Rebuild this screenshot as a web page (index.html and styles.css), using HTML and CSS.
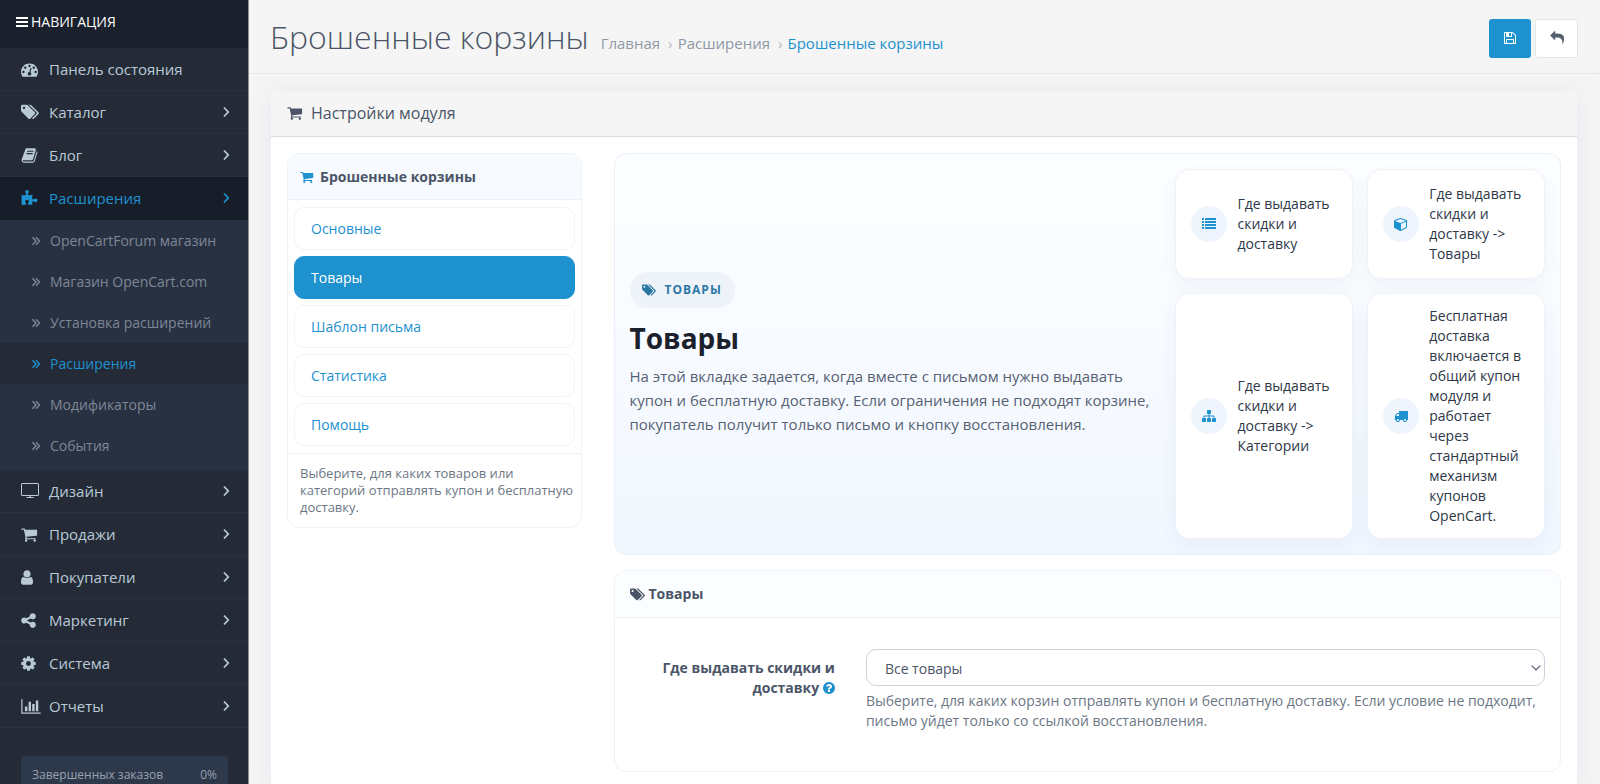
FILE: index.html
```html
<!DOCTYPE html>
<html lang="ru">
<head>
<meta charset="utf-8">
<title>Брошенные корзины</title>
<link rel="stylesheet" href="styles.css">
</head>
<body>
<svg class="sprite" aria-hidden="true">
  <symbol id="bars" viewBox="0 0 12 12"><path d="M0 1h12v2H0zM0 5h12v2H0zM0 9h12v2H0z"/></symbol>
  <symbol id="tachometer" viewBox="0 0 1792 1792"><path d="M384 1152q0-53-37.500-90.500t-90.500-37.500-90.500 37.500-37.500 90.500 37.500 90.500 90.500 37.500 90.500-37.500 37.500-90.500zm192-448q0-53-37.500-90.500t-90.500-37.500-90.500 37.500-37.500 90.500 37.500 90.500 90.500 37.500 90.500-37.500 37.500-90.500zm428 481l101-382q6-26-7.500-48.500t-38.500-29.500-48 6.500-30 39.500l-101 382q-60 5-107 43.500t-63 98.500q-20 77 20 146t117 89 146-20 89-117q16-60-6-117t-72-91zm660-33q0-53-37.500-90.500t-90.500-37.500-90.500 37.500-37.500 90.500 37.500 90.500 90.500 37.500 90.500-37.500 37.500-90.500zm-640-640q0-53-37.500-90.500t-90.500-37.500-90.500 37.500-37.500 90.500 37.500 90.500 90.500 37.500 90.500-37.500 37.500-90.500zm448 192q0-53-37.500-90.500t-90.500-37.500-90.500 37.500-37.500 90.500 37.500 90.500 90.500 37.500 90.500-37.500 37.500-90.500zm320 448q0 261-141 483-19 29-54 29h-1402q-35 0-54-29-141-221-141-483 0-182 71-348t191-286 286-191 348-71 348 71 286 191 191 286 71 348z"/></symbol>
  <symbol id="tags" viewBox="128 0 1920 1792"><path d="M576 448q0-53-37.500-90.500t-90.500-37.500-90.500 37.500-37.500 90.500 37.500 90.500 90.500 37.500 90.500-37.500 37.500-90.500zm1067 576q0 53-37 90l-491 492q-39 37-91 37-53 0-90-37l-715-716q-38-37-64.500-101t-26.500-117v-416q0-52 38-90t90-38h416q53 0 117 26.500t102 64.500l715 714q37 39 37 91zm384 0q0 53-37 90l-491 492q-39 37-91 37-36 0-59-14t-53-45l470-470q37-37 37-90 0-52-37-91l-715-714q-38-38-102-64.500t-117-26.500h224q53 0 117 26.500t102 64.500l715 714q37 39 37 91z"/></symbol>
  <symbol id="book" viewBox="64 0 1664 1792"><path d="M1703 478q40 57 18 129l-275 906q-19 64-76.500 107.500t-122.500 43.500h-923q-77 0-148.500-53.500t-99.500-131.500q-24-67-2-127 0-4 3-27t4-37q1-8-3-21.500t-3-19.500q2-11 8-21t16.500-23.500 16.500-23.500q23-38 45-91.500t30-91.500q3-10 .5-30t-.5-28q3-11 17-28t17-23q21-36 42-92t25-90q1-9-2.500-32t.5-28q4-13 22-30.500t22-22.500q19-26 42.500-84.500t27.500-96.500q1-8-3-25.500t-2-26.500q2-8 9-18t18-23 17-21q8-12 16.500-30.500t15-35 16-36 19.500-32 26.500-23.500 36-11.500 47.500 5.500l-1 3q38-9 51-9h761q74 0 114 56t18 130l-274 906q-36 119-71.500 153.500t-128.500 34.500h-869q-27 0-38 15-11 16-1 43 24 70 144 70h923q29 0 56-15.500t35-41.500l300-987q7-22 5-57 38 15 59 43zm-1064 2q-4 13 2 22.500t20 9.500h608q13 0 25.500-9.500t16.500-22.500l21-64q4-13-2-22.500t-20-9.500h-608q-13 0-25.500 9.500t-16.500 22.500zm-83 256q-4 13 2 22.500t20 9.500h608q13 0 25.500-9.500t16.500-22.500l21-64q4-13-2-22.500t-20-9.500h-608q-13 0-25.500 9.500t-16.500 22.500z"/></symbol>
  <symbol id="puzzle" viewBox="64 0 1728 1792"><path d="M1755 1099q0 81-44.500 135t-123.500 54q-41 0-77.500-17.500t-59-38-56.500-38-71-17.500q-110 0-110 124 0 39 16 115t15 115v5q-22 0-33 1-34 3-97.500 11.500t-115.500 13.500-98 5q-61 0-103-26.500t-42-83.500q0-37 17.500-71t38-56.500 38-59 17.500-77.500q0-79-54-123.500t-135-44.500q-84 0-143 45.500t-59 127.500q0 43 15 83t33.500 64.500 33.500 53 15 50.500q0 45-46 89-37 35-117 35-95 0-245-24-9-2-27.500-4t-27.500-4l-13-2q-1 0-3-1-2 0-2-1v-1024q2 1 17.500 3.500t34 5 21.500 3.500q150 24 245 24 80 0 117-35 46-44 46-89 0-22-15-50.500t-33.500-53-33.500-64.500-15-83q0-82 59-127.500t144-45.500q80 0 134 44.500t54 123.500q0 41-17.500 77.500t-38 59-38 56.500-17.500 71q0 57 42 83.500t103 26.500q64 0 180-15t163-17v2q-1 2-3.500 17.500t-5 34-3.500 21.500q-24 150-24 245 0 80 35 117 44 46 89 46 22 0 50.500-15t53-33.500 64.500-33.500 83-15q82 0 127.500 59t45.500 143z"/></symbol>
  <symbol id="tv" viewBox="0 0 18 16"><path fill-rule="evenodd" d="M1.500 0h15A1.500 1.500 0 0 1 18 1.500v10a1.500 1.500 0 0 1-1.500 1.500h-6.900v1h2.900v1h-7v-1h2.900v-1H1.500A1.500 1.500 0 0 1 0 11.500v-10A1.500 1.500 0 0 1 1.500 0zm0 1a.5.5 0 0 0-.5.5v10a.5.5 0 0 0 .5.5h15a.5.5 0 0 0 .5-.5v-10a.5.5 0 0 0-.5-.5z"/></symbol>
  <symbol id="cart" viewBox="64 0 1728 1792"><path d="M704 1536q0 52-38 90t-90 38-90-38-38-90 38-90 90-38 90 38 38 90zm896 0q0 52-38 90t-90 38-90-38-38-90 38-90 90-38 90 38 38 90zm128-1088v512q0 24-16.500 42.500t-40.500 21.500l-1044 122q13 60 13 70 0 16-24 64h920q26 0 45 19t19 45-19 45-45 19h-1024q-26 0-45-19t-19-45q0-11 8-31.500t16-36 21.500-40 15.500-29.500l-177-823h-204q-26 0-45-19t-19-45 19-45 45-19h256q16 0 28.500 6.500t19.500 15.500 13 24.500 8 26 5.500 29.500 4.500 26h1201q26 0 45 19t19 45z"/></symbol>
  <symbol id="user" viewBox="256 0 1280 1792"><path d="M1536 1399q0 109-62.500 187t-150.500 78h-854q-88 0-150.500-78t-62.500-187q0-85 8.500-160.500t31.500-152 58.500-131 94-89 134.500-34.500q131 128 313 128t313-128q76 0 134.500 34.500t94 89 58.500 131 31.500 152 8.500 160.500zm-256-887q0 159-112.500 271.500t-271.500 112.500-271.500-112.500-112.500-271.500 112.500-271.500 271.500-112.500 271.500 112.500 112.500 271.500z"/></symbol>
  <symbol id="share" viewBox="128 0 1536 1792"><path d="M1344 1024q133 0 226.500 93.500t93.500 226.500-93.500 226.500-226.500 93.500-226.500-93.500-93.500-226.500q0-12 2-34l-360-180q-92 86-218 86-133 0-226.500-93.500t-93.500-226.500 93.500-226.500 226.500-93.500q126 0 218 86l360-180q-2-22-2-34 0-133 93.500-226.500t226.500-93.500 226.500 93.500 93.500 226.500-93.500 226.500-226.500 93.500q-126 0-218-86l-360 180q2 22 2 34t-2 34l360 180q92-86 218-86z"/></symbol>
  <symbol id="cog" viewBox="128 0 1536 1792"><path d="M1152 896q0-106-75-181t-181-75-181 75-75 181 75 181 181 75 181-75 75-181zm512-109v222q0 12-8 23t-20 13l-185 28q-19 54-39 91 35 50 107 138 10 12 10 25t-9 23q-27 37-99 108t-94 71q-12 0-26-9l-138-108q-44 23-91 38-16 136-29 186-7 28-36 28h-222q-14 0-24.500-8.500t-11.500-21.500l-28-184q-49-16-90-37l-141 107q-10 9-25 9-14 0-25-11-126-114-165-168-7-10-7-23 0-12 8-23 15-21 51-66.500t54-70.500q-27-50-41-99l-183-27q-13-2-21-12.500t-8-23.500v-222q0-12 8-23t19-13l186-28q14-46 39-92-40-57-107-138-10-12-10-24 0-10 9-23 26-36 98.500-107.500t94.500-71.500q13 0 26 10l138 107q44-23 91-38 16-136 29-186 7-28 36-28h222q14 0 24.500 8.500t11.500 21.500l28 184q49 16 90 37l142-107q9-9 24-9 13 0 25 10 129 119 165 170 7 8 7 22 0 12-8 23-15 21-51 66.500t-54 70.500q26 50 41 98l183 28q13 2 21 12.500t8 23.500z"/></symbol>
  <symbol id="chart" viewBox="0 0 2048 1792"><path d="M640 896v512h-256v-512h256zm384-512v1024h-256v-1024h256zm1024 1152v128h-2048v-1536h128v1408h1920zm-640-896v768h-256v-768h256zm384-384v1152h-256v-1152h256z"/></symbol>
  <symbol id="angle" viewBox="0 0 8 12"><path d="M2 1.500L6.200 6 2 10.500" fill="none" stroke="currentColor" stroke-width="1.800"/></symbol>
  <symbol id="double-angle" viewBox="0 0 10 10"><path d="M1.500 1.200L5 5 1.500 8.800M5 1.200L8.500 5 5 8.800" fill="none" stroke="currentColor" stroke-width="1.400"/></symbol>
  <symbol id="down" viewBox="0 0 10 6"><path d="M.7.7L5 5 9.300.7" fill="none" stroke="currentColor" stroke-width="1.200"/></symbol>
  <symbol id="save" viewBox="128 0 1536 1792"><path d="M512 1536h768v-384h-768v384zm896 0h128v-896q0-14-10-38.500t-20-34.500l-281-281q-10-10-34-20t-39-10v416q0 40-28 68t-68 28h-576q-40 0-68-28t-28-68v-416h-128v1280h128v-416q0-40 28-68t68-28h832q40 0 68 28t28 68v416zm-384-928v-320q0-13-9.500-22.500t-22.500-9.500h-192q-13 0-22.500 9.500t-9.500 22.500v320q0 13 9.500 22.500t22.500 9.500h192q13 0 22.500-9.500t9.500-22.500zm640 32v928q0 40-28 68t-68 28h-1344q-40 0-68-28t-28-68v-1344q0-40 28-68t68-28h928q40 0 88 20t76 48l280 280q28 28 48 76t20 88z"/></symbol>
  <symbol id="reply" viewBox="0 0 1792 1792"><path d="M1792 1120q0 166-127 451-3 7-10.500 24t-13.500 30-13 22q-12 17-28 17-15 0-23.500-10t-8.500-25q0-9 2.500-26.500t2.500-23.500q5-68 5-123 0-112-19.500-200.500t-54-153.500-89-112-112-78-131.500-49-138-24-141.500-7h-224v256q0 26-19 45t-45 19-45-19l-512-512q-19-19-19-45t19-45l512-512q19-19 45-19t45 19 19 45v256h224q713 0 875 403 53 134 53 333z"/></symbol>
  <symbol id="list" viewBox="0 0 14 14"><path d="M0 1h2v2H0zM3 1h11v2H3zM0 4h2v2H0zM3 4h11v2H3zM0 7h2v2H0zM3 7h11v2H3zM0 10h2v2H0zM3 10h11v2H3z"/></symbol>
  <symbol id="cube" viewBox="0 0 1792 1792"><path d="M896 1629l640-349v-636l-640 233v752zm-64-865l698-254-698-254-698 254zm832-252v768q0 35-18 65t-49 47l-704 384q-28 16-61 16t-61-16l-704-384q-31-17-49-47t-18-65v-768q0-40 23-73t61-47l704-256q22-8 44-8t44 8l704 256q38 14 61 47t23 73z"/></symbol>
  <symbol id="sitemap" viewBox="0 0 1792 1792"><path d="M1792 1248v320q0 40-28 68t-68 28h-320q-40 0-68-28t-28-68v-320q0-40 28-68t68-28h96v-192h-512v192h96q40 0 68 28t28 68v320q0 40-28 68t-68 28h-320q-40 0-68-28t-28-68v-320q0-40 28-68t68-28h96v-192h-512v192h96q40 0 68 28t28 68v320q0 40-28 68t-68 28h-320q-40 0-68-28t-28-68v-320q0-40 28-68t68-28h96v-192q0-52 38-90t90-38h512v-192h-96q-40 0-68-28t-28-68v-320q0-40 28-68t68-28h320q40 0 68 28t28 68v320q0 40-28 68t-68 28h-96v192h512q52 0 90 38t38 90v192h96q40 0 68 28t28 68z"/></symbol>
  <symbol id="truck" viewBox="0 0 1792 1792"><path d="M640 1408q0-52-38-90t-90-38-90 38-38 90 38 90 90 38 90-38 38-90zm-384-512h384v-256h-158q-13 0-22 9l-195 195q-9 9-9 22v30zm1280 512q0-52-38-90t-90-38-90 38-38 90 38 90 90 38 90-38 38-90zm256-1088v1024q0 15-4 26.500t-13.500 18.500-16.500 11.500-23.500 6-22.500 2-25.500 0-22.500-.5q0 106-75 181t-181 75-181-75-75-181h-384q0 106-75 181t-181 75-181-75-75-181h-64q-3 0-22.500.5t-25.500 0-22.500-2-23.500-6-16.500-11.500-13.500-18.500-4-26.500q0-26 19-45t45-19v-320q0-8-.5-35t0-38 2.500-34.500 6.500-37 14-30.500 22.500-30l198-198q19-19 50.500-32t58.500-13h160v-192q0-26 19-45t45-19h1024q26 0 45 19t19 45z"/></symbol>
  <symbol id="question" viewBox="128 128 1536 1536"><path d="M1024 1376v-192q0-14-9-23t-23-9h-192q-14 0-23 9t-9 23v192q0 14 9 23t23 9h192q14 0 23-9t9-23zm256-672q0-88-55.500-163t-138.500-116-170-41q-243 0-371 213-15 24 8 42l132 100q7 6 19 6 16 0 25-12 53-68 86-92 34-24 86-24 48 0 85.500 26t37.500 59q0 38-20 61t-68 45q-63 28-115.500 86.500t-52.500 125.500v36q0 14 9 23t23 9h192q14 0 23-9t9-23q0-19 21.500-49.500t54.500-49.500q32-18 49-28.500t46-35 44.500-48 28-60.500 12.500-81zm384 192q0 209-103 385.500t-279.500 279.500-385.500 103-385.500-103-279.500-279.500-103-385.500 103-385.500 279.500-279.500 385.500-103 385.500 103 279.500 279.500 103 385.500z"/></symbol>
</svg>
<div class="app">
  <nav class="sidebar" aria-label="Навигация">
    <div class="nav-title"><svg class="icon icon-12"><use href="#bars"/></svg>НАВИГАЦИЯ</div>
    <ul class="menu">
      <li><a class="menu-link" href="#"><span class="menu-icon"><svg class="icon icon-17"><use href="#tachometer"/></svg></span><span>Панель состояния</span></a></li>
      <li><a class="menu-link" href="#"><span class="menu-icon"><svg class="icon icon-18"><use href="#tags"/></svg></span><span>Каталог</span><svg class="icon angle"><use href="#angle"/></svg></a></li>
      <li><a class="menu-link" href="#"><span class="menu-icon"><svg class="icon icon-17"><use href="#book"/></svg></span><span>Блог</span><svg class="icon angle"><use href="#angle"/></svg></a></li>
      <li>
        <a class="menu-link active" href="#"><span class="menu-icon"><svg class="icon icon-17"><use href="#puzzle"/></svg></span><span>Расширения</span><svg class="icon angle"><use href="#angle"/></svg></a>
        <ul class="submenu">
          <li><a class="sub-link" href="#"><svg class="icon icon-10"><use href="#double-angle"/></svg>OpenCartForum магазин</a></li>
          <li><a class="sub-link" href="#"><svg class="icon icon-10"><use href="#double-angle"/></svg>Магазин OpenCart.com</a></li>
          <li><a class="sub-link" href="#"><svg class="icon icon-10"><use href="#double-angle"/></svg>Установка расширений</a></li>
          <li><a class="sub-link active" href="#"><svg class="icon icon-10"><use href="#double-angle"/></svg>Расширения</a></li>
          <li><a class="sub-link" href="#"><svg class="icon icon-10"><use href="#double-angle"/></svg>Модификаторы</a></li>
          <li><a class="sub-link" href="#"><svg class="icon icon-10"><use href="#double-angle"/></svg>События</a></li>
        </ul>
      </li>
      <li><a class="menu-link" href="#"><span class="menu-icon"><svg class="icon icon-18"><use href="#tv"/></svg></span><span>Дизайн</span><svg class="icon angle"><use href="#angle"/></svg></a></li>
      <li><a class="menu-link" href="#"><span class="menu-icon"><svg class="icon icon-17"><use href="#cart"/></svg></span><span>Продажи</span><svg class="icon angle"><use href="#angle"/></svg></a></li>
      <li><a class="menu-link" href="#"><span class="menu-icon"><svg class="icon icon-user"><use href="#user"/></svg></span><span>Покупатели</span><svg class="icon angle"><use href="#angle"/></svg></a></li>
      <li><a class="menu-link" href="#"><span class="menu-icon"><svg class="icon icon-share"><use href="#share"/></svg></span><span>Маркетинг</span><svg class="icon angle"><use href="#angle"/></svg></a></li>
      <li><a class="menu-link" href="#"><span class="menu-icon"><svg class="icon icon-share"><use href="#cog"/></svg></span><span>Система</span><svg class="icon angle"><use href="#angle"/></svg></a></li>
      <li><a class="menu-link" href="#"><span class="menu-icon"><svg class="icon icon-20"><use href="#chart"/></svg></span><span>Отчеты</span><svg class="icon angle"><use href="#angle"/></svg></a></li>
    </ul>
    <div class="stats"><span>Завершенных заказов</span><span>0%</span></div>
  </nav>
  <main class="content">
    <header class="page-header">
      <h1 class="page-title">Брошенные корзины</h1>
      <ol class="breadcrumb">
        <li><a href="#">Главная</a></li>
        <li><a href="#">Расширения</a></li>
        <li><a class="current" href="#">Брошенные корзины</a></li>
      </ol>
      <div class="actions">
        <button class="btn btn-primary" type="button" aria-label="Сохранить"><svg class="icon icon-14"><use href="#save"/></svg></button>
        <button class="btn btn-default" type="button" aria-label="Назад"><svg class="icon icon-14"><use href="#reply"/></svg></button>
      </div>
    </header>
    <section class="panel">
      <h2 class="panel-title"><svg class="icon icon-16"><use href="#cart"/></svg>Настройки модуля</h2>
      <div class="panel-body">
        <aside class="tabs">
          <h3 class="tabs-title"><svg class="icon icon-14"><use href="#cart"/></svg>Брошенные корзины</h3>
          <div class="tab-list">
            <a class="tab" href="#">Основные</a>
            <a class="tab active" href="#">Товары</a>
            <a class="tab" href="#">Шаблон письма</a>
            <a class="tab" href="#">Статистика</a>
            <a class="tab" href="#">Помощь</a>
          </div>
          <p class="tabs-note">Выберите, для каких товаров или категорий отправлять купон и бесплатную доставку.</p>
        </aside>
        <div class="sections">
          <section class="hero">
            <div class="hero-text">
              <span class="pill"><svg class="icon icon-14"><use href="#tags"/></svg>ТОВАРЫ</span>
              <h3 class="hero-title">Товары</h3>
              <p class="hero-lead">На этой вкладке задается, когда вместе с письмом нужно выдавать купон и бесплатную доставку. Если ограничения не подходят корзине, покупатель получит только письмо и кнопку восстановления.</p>
            </div>
            <ul class="features">
              <li class="feature"><span class="bubble"><svg class="icon icon-14"><use href="#list"/></svg></span><span>Где выдавать скидки и доставку</span></li>
              <li class="feature"><span class="bubble"><svg class="icon icon-14"><use href="#cube"/></svg></span><span>Где выдавать скидки и доставку -&gt; Товары</span></li>
              <li class="feature"><span class="bubble"><svg class="icon icon-14"><use href="#sitemap"/></svg></span><span>Где выдавать скидки и доставку -&gt; Категории</span></li>
              <li class="feature"><span class="bubble"><svg class="icon icon-14"><use href="#truck"/></svg></span><span>Бесплатная доставка включается в общий купон модуля и работает через стандартный механизм купонов OpenCart.</span></li>
            </ul>
          </section>
          <section class="card">
            <h3 class="card-title"><svg class="icon icon-15"><use href="#tags"/></svg>Товары</h3>
            <div class="form-row">
              <label class="form-label" for="scope">Где выдавать скидки и доставку <svg class="icon icon-12 hint"><use href="#question"/></svg></label>
              <div class="form-field">
                <div class="select-wrap">
                  <select class="select" id="scope" aria-describedby="scope-help"><option>Все товары</option></select>
                  <svg class="icon select-arrow"><use href="#down"/></svg>
                </div>
                <p class="help" id="scope-help">Выберите, для каких корзин отправлять купон и бесплатную доставку. Если условие не подходит, письмо уйдет только со ссылкой восстановления.</p>
              </div>
            </div>
          </section>
        </div>
      </div>
    </section>
  </main>
</div>
</body>
</html>
```
FILE: styles.css
```css
* { box-sizing: border-box; }
body, h1, h2, h3, p, ul, ol { margin: 0; padding: 0; }
ul, ol { list-style: none; }
a { text-decoration: none; color: inherit; }

body {
  font-family: "Open Sans", "Noto Sans", sans-serif;
  font-size: 14px;
  line-height: 20px;
  color: #4a5568;
  background: #f5f5f5;
}

.sprite { display: none; }
.icon { flex: none; width: 14px; height: 14px; fill: currentColor; }
.icon-10 { width: 10px; height: 10px; }
.icon-12 { width: 12px; height: 12px; }
.icon-15 { width: 15px; height: 15px; }
.icon-16 { width: 16px; height: 16px; }
.icon-17 { width: 17px; height: 17px; }
.icon-18 { width: 18px; height: 18px; }
.icon-20 { width: 20px; height: 17px; }
.icon-user { width: 12px; height: 17px; }
.icon-share { width: 15px; height: 17px; }

.app { display: flex; height: 100vh; overflow: hidden; }

/* Sidebar */
.sidebar { flex: 0 0 249px; background: #242b36; border-right: 1px solid #8b8f96; overflow: hidden; }
.nav-title {
  display: flex; align-items: center; gap: 3px;
  height: 48px; padding: 0 16px 4px;
  background: #1a202c; color: #fff; font-size: 14px;
}
.menu-link {
  display: flex; align-items: center;
  height: 43px; padding: 0 18px 0 21px;
  border-bottom: 1px solid #273240;
  color: #b9c9d6; font-size: 15px;
}
.menu-link.active { background: #181e29; border-color: #181e29; color: #1e91cf; }
.menu-icon { display: flex; width: 28px; }
.angle { width: 8px; height: 12px; margin-left: auto; }
.submenu { padding-bottom: 4px; background: #283142; }
.sub-link {
  display: flex; align-items: center; gap: 9px;
  height: 41px; padding-left: 31px;
  color: #7d8795; font-size: 14px;
}
.sub-link.active { background: #242b36; color: #1e91cf; }
.stats {
  display: flex; justify-content: space-between;
  margin: 28px 20px 0 21px; padding: 9px 11px 20px;
  background: #2d384b; border-radius: 3px;
  color: #98a2b0; font-size: 12px;
}

/* Page header */
.content { flex: 1; min-width: 0; overflow-y: auto; scrollbar-width: none; }
.page-header {
  display: flex; align-items: center;
  height: 74px; padding: 0 22px 0 21px;
  border-bottom: 1px solid #e6e7e9;
}
.page-title { font-size: 32px; line-height: 40px; font-weight: 300; color: #4b5567; }
.breadcrumb { display: flex; margin-left: 12px; padding-top: 12px; font-size: 15px; color: #8f99a6; }
.breadcrumb li + li::before { content: "›"; padding: 0 5px 0 8px; color: #b4bac2; }
.breadcrumb .current { color: #1e91cf; }
.actions { display: flex; gap: 4px; margin-left: auto; padding-top: 3px; }
.btn {
  display: flex; align-items: center; justify-content: center;
  width: 42px; height: 39px; padding: 0;
  border: 1px solid transparent; border-radius: 3px;
}
.btn-primary { background: #1e91cf; color: #fff; }
.btn-default { background: #fff; border-color: #e3e5e8; color: #556070; width: 43px; }

/* Panel */
.panel { margin: 17px 23px 21px 22px; background: #fff; border-radius: 2px; box-shadow: 0 2px 22px rgba(160, 185, 215, .2); }
.panel-title {
  display: flex; align-items: center; gap: 8px;
  height: 46px; padding: 0 16px 2px;
  background: #f5f5f5; border-bottom: 1px solid #d9dce0;
  font-size: 16px; font-weight: 400; line-height: 20px; color: #4b5567;
}
.panel-body { display: grid; grid-template-columns: minmax(0, 1fr) minmax(0, 3fr); align-items: start; padding: 16px 0; }

.tabs { margin: 0 16px; border: 1px solid #edf3f9; border-radius: 12px; overflow: hidden; }
.tabs-title {
  display: flex; align-items: center; gap: 6px;
  height: 46px; padding: 0 12px;
  background: #f7fbff; border-bottom: 1px solid #edf2f7;
  font-size: 14px; font-weight: 700; color: #4a5568;
}
.tabs-title .icon { color: #1e91cf; }
.tab-list { display: grid; gap: 6px; padding: 7px 6px; }
.tab {
  padding: 11px 16px 10px; border: 1px solid #eff4f9; border-radius: 10px;
  line-height: 20px; color: #1e91cf;
}
.tab.active { background: #1e91cf; border-color: #1e91cf; color: #fff; }
.tabs-note { padding: 11px 6px 11px 12px; border-top: 1px solid #edf2f7; font-size: 13px; line-height: 17px; color: #6c7786; }

.sections { display: grid; gap: 15px; margin: 0 16px; }
.hero {
  display: grid; grid-template-columns: minmax(0, 10fr) minmax(0, 7fr); gap: 18px; align-items: center;
  padding: 15px; border: 1px solid #e9f0f7; border-radius: 12px;
  background: linear-gradient(180deg, #fdfeff, #f1f7ff);
}
.pill {
  display: inline-flex; align-items: center; gap: 9px;
  height: 36px; padding: 0 13px 0 12px; border-radius: 18px;
  background: #eef3f9; color: #2b78a5;
  font-size: 12px; font-weight: 700; letter-spacing: 1px;
}
.hero-title { margin: 12px 0 8px; font-size: 28px; line-height: 36px; font-weight: 700; color: #1a202c; }
.hero-lead { font-size: 15px; line-height: 24px; color: #566173; }
.features { display: grid; grid-template-columns: repeat(2, minmax(0, 1fr)); gap: 14px; }
.feature {
  display: flex; align-items: center; gap: 10px;
  min-height: 110px; padding: 12px 15px;
  background: #fff; border: 1px solid #edf2f8; border-radius: 14px;
  box-shadow: 0 6px 18px rgba(60, 90, 130, .06);
  color: #2d3748;
}
.bubble {
  display: flex; flex: none; align-items: center; justify-content: center;
  width: 36px; height: 36px; border-radius: 50%;
  background: #eff5fd; color: #1e91cf;
}

.card { border: 1px solid #edf2f7; border-radius: 12px; overflow: hidden; }
.card-title {
  display: flex; align-items: center; gap: 4px;
  height: 47px; padding: 0 15px;
  background: #fbfdff; border-bottom: 1px solid #edf2f7;
  font-size: 14px; font-weight: 700; color: #4a5568;
}
.form-row { display: grid; grid-template-columns: minmax(0, 1fr) minmax(0, 3fr); padding: 31px 0 40px; }
.form-label { padding: 9px 16px 0; text-align: right; font-weight: 700; color: #4a5568; }
.hint { color: #1e91cf; vertical-align: -1px; }
.form-field { padding: 0 15px; }
.select-wrap { display: grid; align-items: center; }
.select-wrap > * { grid-area: 1 / 1; }
.select {
  appearance: none; width: 100%; height: 37px; padding: 2px 18px 0;
  border: 1px solid #c9d3dd; border-radius: 10px; background: #fff;
  font-family: inherit; font-size: 14px; color: #4a5568;
}
.select-arrow { width: 10px; height: 6px; margin-right: 4px; justify-self: end; pointer-events: none; }
.help { margin-top: 5px; color: #6c7786; }
```
